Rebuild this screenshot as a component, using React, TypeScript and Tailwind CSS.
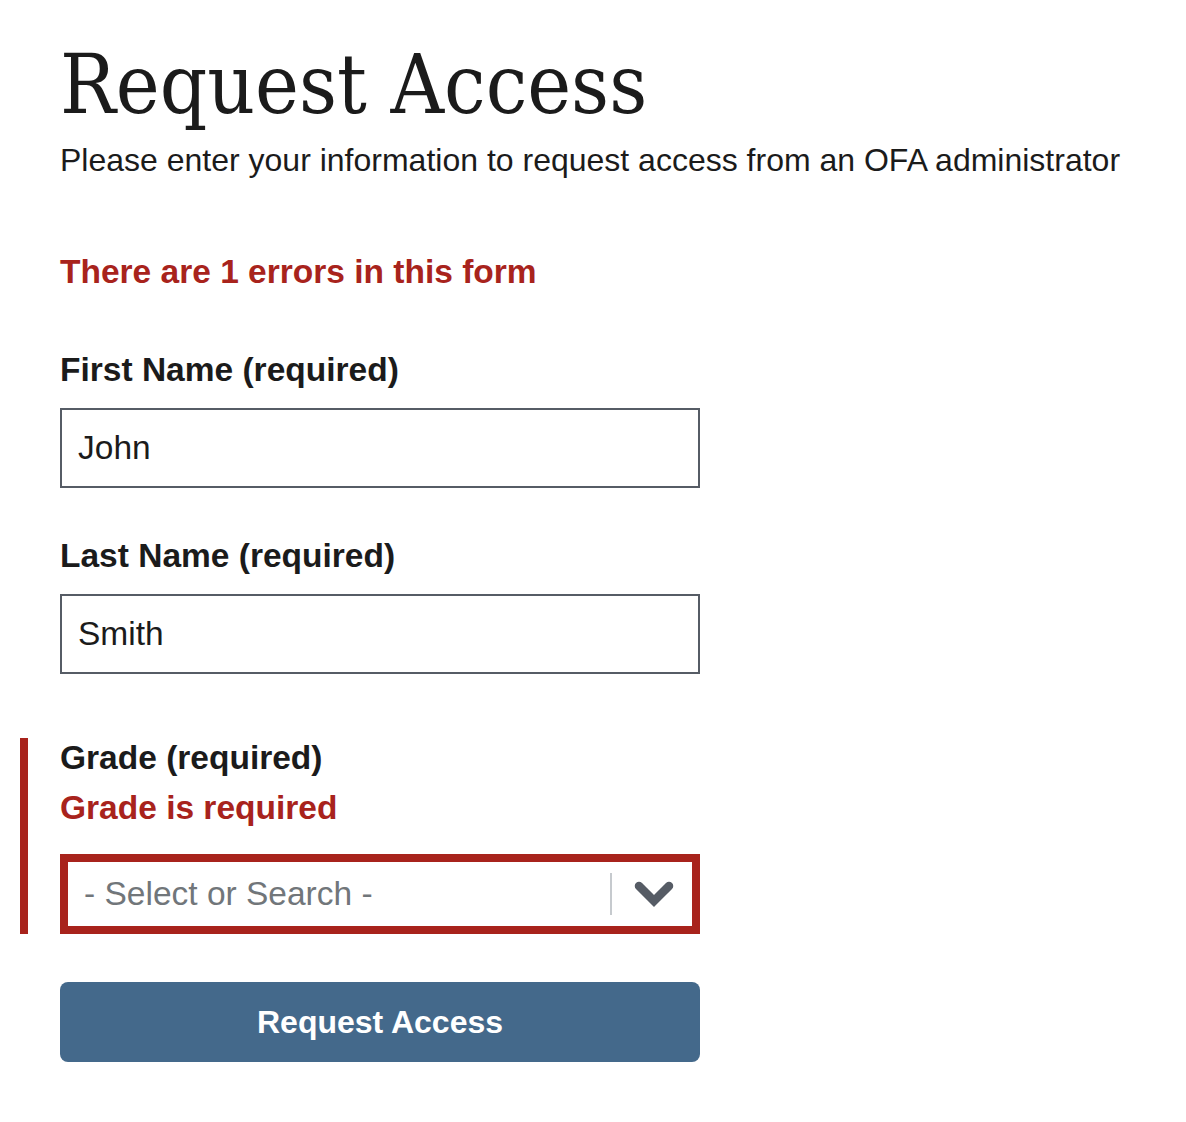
const sans = { fontFamily: '"Liberation Sans", Arial, sans-serif' };

function TextField({ label, value }: { label: string; value: string }) {
    return (
        <div className="flex flex-col">
            <label className="text-[33.5px] font-bold leading-[40px] text-[#1b1b1b]">{label}</label>
            <div className="mt-[18px] h-[80px] w-[640px] border-2 border-[#565c65] bg-white flex items-center px-[16px]">
                <span className="text-[33.5px] text-[#1b1b1b]">{value}</span>
            </div>
        </div>
    );
}

function Chevron() {
    return (
        <svg width="44" height="30" viewBox="0 0 44 30" fill="none">
            <polyline
                points="7,7 22,22 37,7"
                stroke="#565c65"
                strokeWidth="8.5"
                strokeLinecap="round"
                strokeLinejoin="miter"
            />
        </svg>
    );
}

export default function App() {
    return (
        <div className="bg-white min-h-[1122px] w-[1186px] pt-[36px]" style={sans}>
            <div className="pl-[60px]">
                <h1
                    className="text-[82.5px] leading-[96px] text-[#1b1b1b] font-stretch-condensed"
                    style={{ fontFamily: '"DejaVu Serif Condensed", "DejaVu Serif", "Liberation Serif", serif' }}
                >
                    Request Access
                </h1>
                <p className="text-[32px] leading-[40px] text-[#1b1b1b] mt-[8px]">
                    Please enter your information to request access from an OFA administrator
                </p>
                <p className="text-[33.5px] font-bold leading-[40px] text-[#a8231c] mt-[72px]">
                    There are 1 errors in this form
                </p>
                <div className="mt-[58px] flex flex-col gap-[48px]">
                    <TextField label="First Name (required)" value="John" />
                    <TextField label="Last Name (required)" value="Smith" />
                </div>
            </div>

            <div className="mt-[64px] ml-[20px] border-l-[8px] border-[#a8231c] pl-[32px] w-[680px]">
                <div className="text-[33.5px] font-bold leading-[40px] text-[#1b1b1b]">Grade (required)</div>
                <div className="text-[33.5px] font-bold leading-[40px] text-[#a8231c] mt-[10px]">Grade is required</div>
                <div className="mt-[26px] h-[80px] w-[640px] border-[8px] border-[#a8231c] bg-white flex items-center">
                    <span className="flex-1 pl-[16px] text-[33.5px] text-[#71767a]">- Select or Search -</span>
                    <span className="w-[2px] h-[42px] bg-[#c6cace]" />
                    <span className="w-[80px] pl-[4px] flex items-center justify-center">
                        <Chevron />
                    </span>
                </div>
            </div>

            <div className="pl-[60px] mt-[48px]">
                <button className="h-[80px] w-[640px] rounded-[8px] bg-[#44698b] text-white text-[32px] font-bold">
                    Request Access
                </button>
            </div>
        </div>
    );
}
